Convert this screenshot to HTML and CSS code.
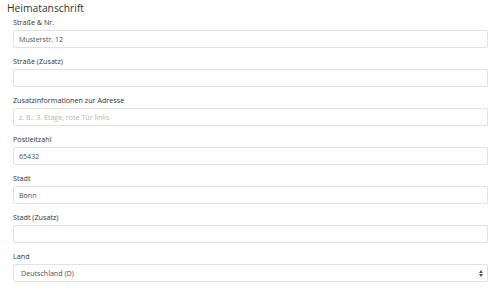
FILE: index.html
```html
<!DOCTYPE html>
<html lang="de">
<head>
    <meta charset="UTF-8">
    <meta name="viewport" content="width=device-width, initial-scale=1.0">
    <title>Heimatanschrift</title>
    <link rel="stylesheet" href="styles.css">
</head>
<body>
    <div class="section">
        <h4 class="section-title">Heimatanschrift</h4>

        <div class="form-group">
            <label for="street">Straße &amp; Nr.</label>
            <input type="text" id="street" class="form-control" value="Musterstr. 12">
        </div>

        <div class="form-group">
            <label for="street2">Straße (Zusatz)</label>
            <input type="text" id="street2" class="form-control">
        </div>

        <div class="form-group">
            <label for="addressInfo">Zusatzinformationen zur Adresse</label>
            <input type="text" id="addressInfo" class="form-control" placeholder="z. B.: 3. Etage, rote Tür links">
        </div>

        <div class="form-group">
            <label for="zip">Postleitzahl</label>
            <input type="text" id="zip" class="form-control" value="65432">
        </div>

        <div class="form-group">
            <label for="city">Stadt</label>
            <input type="text" id="city" class="form-control" value="Bonn">
        </div>

        <div class="form-group">
            <label for="city2">Stadt (Zusatz)</label>
            <input type="text" id="city2" class="form-control">
        </div>

        <div class="form-group">
            <label for="country">Land</label>
            <div class="select-wrap">
                <select id="country" class="form-control custom-select">
                    <option selected>Deutschland (D)</option>
                    <option>Österreich (A)</option>
                    <option>Schweiz (CH)</option>
                </select>
                <svg class="select-arrow" width="4" height="7" viewBox="0 0 4 7">
                    <path d="M0 3 L2 0 L4 3 Z M0 4 L2 7 L4 4 Z" fill="#555"/>
                </svg>
            </div>
        </div>
    </div>
</body>
</html>
```

FILE: styles.css
```css
body {
    margin: 0;
    font-family: "Open Sans", Arial, sans-serif;
    color: #333;
    background-color: #fff;
}
.section {
    padding: 1px 12px 0 13px;
}
.section-title {
    font-size: 10.3px;
    font-weight: normal;
    line-height: 14px;
    margin: 0 0 2px -6px;
    color: #333;
}
.form-group {
    margin-bottom: 8px;
}
.form-group label {
    display: block;
    font-size: 7.2px;
    line-height: 10px;
    margin-bottom: 3px;
    color: #333;
}
.form-control {
    display: block;
    box-sizing: border-box;
    width: 100%;
    height: 18px;
    padding: 0 5px;
    font-family: inherit;
    font-size: 7.1px;
    color: #495057;
    background-color: #fff;
    border: 1px solid #e2e2e2;
    border-radius: 2px;
    outline: none;
}
.form-control::placeholder {
    color: #b5b5b5;
}
.select-wrap {
    position: relative;
}
.custom-select {
    appearance: none;
    -webkit-appearance: none;
    padding-left: 7px;
}
.select-arrow {
    position: absolute;
    right: 5px;
    top: 6px;
    pointer-events: none;
}
```
